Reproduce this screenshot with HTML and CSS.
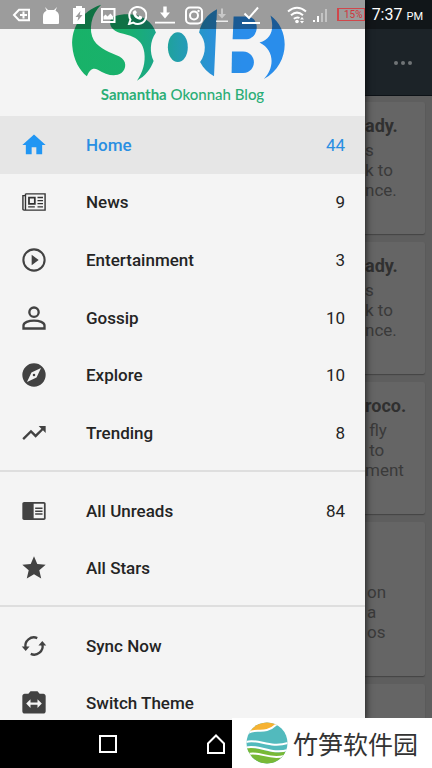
FILE: index.html
```html
<!DOCTYPE html>
<html lang="en">
<head>
<meta charset="utf-8">
<meta name="viewport" content="width=device-width, initial-scale=1">
<title>Samantha Okonnah Blog</title>
<link rel="stylesheet" href="styles.css">
</head>
<body>
<div class="app">
  <aside class="drawer">
    <header class="brand">
      <svg class="brand-mark" viewBox="30 0 655 250" aria-hidden="true">
        <defs>
          <linearGradient id="tone" gradientUnits="userSpaceOnUse" x1="35" y1="0" x2="675" y2="0">
            <stop offset="0" stop-color="#18b268"/>
            <stop offset=".25" stop-color="#19b16c"/>
            <stop offset=".4" stop-color="#1ba68b"/>
            <stop offset=".5" stop-color="#229eac"/>
            <stop offset=".66" stop-color="#2a91d8"/>
            <stop offset=".8" stop-color="#298deb"/>
            <stop offset="1" stop-color="#298deb"/>
          </linearGradient>
        </defs>
        <g fill="url(#tone)">
          <path d="M123 14C62 34 33 84 36 138C39 180 58 213 80 230C88 209 99 202 113 210C138 226 165 233 184 220C200 207 201 182 178 170C151 157 119 149 101 121C84 91 92 43 123 14Z"/>
          <path d="M150 66C151 49 178 42 208 43C249 44 277 67 288 98C269 125 269 158 281 184C272 209 255 230 231 243C249 216 257 188 253 158C248 119 218 109 190 102C163 95 149 84 150 66Z"/>
          <ellipse cx="354" cy="142" rx="30" ry="45"/>
          <path d="M472 28C443 43 424 67 418 98C441 124 440 161 421 187C431 206 445 220 463 230Z"/>
          <path d="M522 50H562C602 51 601 113 562 118H519Z"/>
          <path d="M517 155H550C594 157 594 217 551 220H516Z"/>
          <path d="M633 47C694 91 692 194 613 238C646 205 646 150 600 128C637 119 645 85 633 47Z"/>
        </g>
      </svg>
      <h1 class="brand-name"><b>Samantha</b> Okonnah Blog</h1>
    </header>
    <nav class="menu">
      <div class="group group-six">
        <a class="item active" href="#home">
          <svg class="icon" viewBox="0 0 24 24"><path d="M10 20v-6h4v6h5v-8h3L12 3 2 12h3v8z"/></svg>
          <span class="label">Home</span><span class="count">44</span></a>
        <a class="item" href="#news">
          <svg class="icon line thin" viewBox="0 0 24 24"><path d="M4.700 5H21.500V19H3.500Q2.500 19 2.500 18V6.500H4.700M4.700 5V18.500"/><path d="M7.700 8.300h5v5.200h-5z" stroke-width="1.500"/><path d="M15 8.200h4.700M15 10.800h4.700M15 13.400h4.700M7 16.200h5.700M15 16.200h4.700"/></svg>
          <span class="label">News</span><span class="count">9</span></a>
        <a class="item" href="#entertainment">
          <svg class="icon" viewBox="0 0 24 24"><path d="M10 16.500l6-4.500-6-4.500zM12 2a10 10 0 1 0 0 20 10 10 0 0 0 0-20zm0 18.200a8.200 8.200 0 1 1 0-16.400 8.200 8.200 0 0 1 0 16.400z"/></svg>
          <span class="label">Entertainment</span><span class="count">3</span></a>
        <a class="item" href="#gossip">
          <svg class="icon line" viewBox="0 0 24 24"><circle cx="12" cy="7" r="4"/><path d="M3 21V18.500C3 12.800 21 12.800 21 18.500V21Z"/></svg>
          <span class="label">Gossip</span><span class="count">10</span></a>
        <a class="item" href="#explore">
          <svg class="icon" viewBox="0 0 24 24"><path d="M12 10.900a1.100 1.100 0 1 0 0 2.200 1.100 1.100 0 0 0 0-2.200zM12 2a10 10 0 1 0 0 20 10 10 0 0 0 0-20zm2.190 12.190L6 18l3.810-8.190L18 6z"/></svg>
          <span class="label">Explore</span><span class="count">10</span></a>
        <a class="item" href="#trending">
          <svg class="icon" viewBox="0 0 24 24"><path d="M16 6l2.290 2.290-4.880 4.880-4-4L2 16.590 3.410 18l6-6 4 4 6.300-6.290L22 12V6z"/></svg>
          <span class="label">Trending</span><span class="count">8</span></a>
      </div>
      <hr class="rule">
      <div class="group group-two">
        <a class="item" href="#unreads">
          <svg class="icon" viewBox="0 0 24 24"><path d="M20.500 4.300h-17C2.700 4.300 2 5 2 5.800v12.400c0 .8.700 1.500 1.500 1.500h17c.8 0 1.500-.7 1.500-1.500V5.800c0-.8-.7-1.500-1.500-1.500zm0 13.900h-8.800V5.800h8.800z"/><path d="M13 9h6.300v1.300H13zM13 11.500h6.300v1.300H13zM13 14h6.300v1.300H13z"/></svg>
          <span class="label">All Unreads</span><span class="count">84</span></a>
        <a class="item" href="#stars">
          <svg class="icon" viewBox="0 0 24 24"><path d="M12 17.270L18.180 21l-1.640-7.030L22 9.240l-7.190-.61L12 2 9.190 8.630 2 9.240l5.460 4.730L5.820 21z"/></svg>
          <span class="label">All Stars</span></a>
      </div>
      <hr class="rule">
      <div class="group group-two">
        <a class="item" href="#sync">
          <svg class="icon" viewBox="0 0 24 24"><path class="arc" d="M4.800 13.500A7.300 7.300 0 0 1 14.800 5.200M19.200 10.500A7.300 7.300 0 0 1 9.200 18.800"/><path d="M1.500 12.500h6.700l-3.300 3.700zM15.800 11.500h6.700L19.100 7.800z"/></svg>
          <span class="label">Sync Now</span></a>
        <a class="item" href="#theme">
          <svg class="icon" viewBox="0 0 24 24"><path d="M20 4h-3.200L15 2H9L7.200 4H4c-1.100 0-2 .9-2 2v13c0 1.100.9 2 2 2h16c1.100 0 2-.9 2-2V6c0-1.100-.9-2-2-2zm-5 12.200V13.500H9v2.700L5.300 12.500 9 8.800v2.700h6V8.800l3.700 3.700z"/></svg>
          <span class="label">Switch Theme</span></a>
      </div>
    </nav>
  </aside>

  <main class="feed">
    <div class="toolbar">
      <button class="more" aria-label="More options"><i></i><i></i><i></i></button>
    </div>
    <div class="cards">
      <article class="card"><h2>ady.</h2><p>s<br>k to<br>nce.</p></article>
      <article class="card"><h2>ady.</h2><p>s<br>k to<br>nce.</p></article>
      <article class="card"><h2>roco.</h2><p>&nbsp;fly<br>&nbsp;to<br>ment</p></article>
      <article class="card tall"><p>on<br>a<br>os</p></article>
      <article class="card"></article>
    </div>
  </main>

  <div class="status">
    <div class="notices">
      <svg viewBox="0 0 20 20"><path class="s2" d="M2 10 7 4.700H17V15.300H7Z"/><path class="s2" d="M8 10h7M11.500 6.500v7"/></svg>
      <svg viewBox="0 0 20 20"><path d="M2 18V11C2 8 4 6.500 5.500 5.800L4 2l3 3h6l3-3-1.500 3.800C16 6.500 18 8 18 11v7q0 1-1 1H3q-1 0-1-1z"/></svg>
      <svg viewBox="0 0 20 20"><path fill-rule="evenodd" d="M7 1h6v2h3v16H4V3h3zM11.500 6l-5 6H9.300l-.8 4 5-6h-2.800z"/></svg>
      <svg viewBox="0 0 20 20"><path class="s2" d="M4 4h12.500v13H4z"/><path d="M5.500 14.500v-3l2-2 2 2 3-3 2.500 3v3z"/></svg>
      <svg viewBox="0 0 20 20"><path class="s2" d="M2 19l1.500-4.300A8.500 8.500 0 1 1 6.300 17.600Z"/><path d="M7.200 5.500 5.800 7c0 4.200 3.500 7.700 7.700 7.700l1.700-1.500v-1.500l-2.500-1.300-1.200 1.300C10 11 9.300 10.200 8.700 9l1.200-1.200-1-2.300z"/></svg>
      <svg viewBox="0 0 20 20"><path d="M8.300 1.500h3.400v6H15l-5 6-5-6h3.300zM0 16.800h20v1.700H0z"/></svg>
      <svg viewBox="0 0 20 20"><rect class="s2" x="2" y="2.500" width="16" height="16" rx="4"/><circle class="s2" cx="10" cy="10.500" r="4"/><circle cx="14.500" cy="6" r="1.200"/></svg>
      <svg viewBox="0 0 20 20"><path opacity=".45" d="M9 3.500h2V9h3l-4 4.500L6 9h3z"/><path opacity=".8" d="M4 15.500h12v1.500H4z"/></svg>
      <svg viewBox="0 0 20 20"><path d="M1 17h18v2H1z"/><path class="s2" d="M3.500 8.500 8 13 17 2.500"/></svg>
    </div>
    <svg class="wifi" viewBox="0 0 20 20"><path class="s2" d="M1 6.500Q10-1 19 6.500M4 10.300Q10 5 16 10.300M6.800 13.800Q10 11.500 12.500 13"/><circle cx="10" cy="16.500" r="1.800"/><path d="M15 12l2 2.500h-4zM15 18.500l2-2.500h-4z"/></svg>
    <svg class="signal" viewBox="0 0 16 16"><path d="M1 13h2v2H1zM5 9h2v6H5z"/><path opacity=".4" d="M9 6h2v9H9zM13 2h2v13h-2z"/></svg>
    <span class="battery">15%</span>
    <time class="clock">7:37 <small>PM</small></time>
  </div>
</div>

<footer class="system">
  <button aria-label="Recent apps"><svg viewBox="0 0 20 20"><path d="M2 2h16v16H2z"/></svg></button>
  <button aria-label="Home screen"><svg viewBox="0 0 20 20"><path d="M2 9.500 10 1.500l8 8V19H2z"/></svg></button>
</footer>

<div class="badge">
  <svg viewBox="0 0 42 42" aria-hidden="true">
    <defs><clipPath id="disc"><circle cx="21" cy="21" r="20.500"/></clipPath></defs>
    <g clip-path="url(#disc)">
      <path fill="#52babd" d="M0 0h42v42H0z"/>
      <path fill="#f6b231" d="M0 12C8 5 15 14 30 3L32 0H0z"/>
      <path fill="#78b937" d="M0 26C13 24 25 34 42 29V42H0z"/>
      <g class="waves">
        <path d="M2 11C11 5 18 14 31 2"/>
        <path d="M0 20C12 16 24 27 42 21"/>
        <path d="M0 25.500C13 22 25 33 42 28"/>
        <path d="M2 32C15 29 22 38 38 34"/>
      </g>
    </g>
  </svg>
  <span lang="zh-CN">竹笋软件园</span>
</div>
</body>
</html>
```

FILE: styles.css
```css
* {
  box-sizing: border-box;
}

body {
  margin: 0;
  height: 100vh;
  display: flex;
  flex-direction: column;
  position: relative;
  overflow: hidden;
  background: #000;
  font-family: Roboto, "Liberation Sans", sans-serif;
}

h1, h2, p {
  margin: 0;
}

button {
  border: 0;
  padding: 0;
  background: none;
}

.app {
  flex: 1;
  min-height: 0;
  display: grid;
  grid-template-columns: 1fr 67px;
  grid-template-rows: minmax(0, 1fr);
  position: relative;
  overflow: hidden;
}

/* Drawer */
.drawer {
  background: #f4f4f4;
  overflow: hidden;
  position: relative;
  z-index: 1;
  box-shadow: 0 0 7px 1px rgba(0, 0, 0, .7);
}

.brand {
  height: 116px;
  display: flex;
  flex-direction: column;
  align-items: center;
}

.brand-mark {
  width: 218px;
  height: 83px;
  flex: none;
  margin-right: 8px;
}

.brand-name {
  font: 500 15px/22px Lato, sans-serif;
  color: #2aae76;
}

.brand-name b {
  font-weight: 700;
}

.group {
  display: grid;
  grid-auto-rows: 1fr;
}

.group-six {
  height: 346px;
}

.group-two {
  height: 115px;
}

.item {
  display: flex;
  align-items: center;
  padding: 0 20px;
  color: #242424;
  font-size: 17px;
  text-decoration: none;
}

.icon {
  width: 28px;
  height: 28px;
  margin-right: 38px;
  fill: #424242;
}

.line {
  fill: none;
  stroke: #424242;
  stroke-width: 2;
}

.thin {
  stroke: #333;
  stroke-width: 1.2;
}

.arc {
  fill: none;
  stroke: #424242;
  stroke-width: 2;
}

.label {
  flex: 1;
  font-weight: 500;
}

.active {
  background: #e6e6e6;
  color: #2a8fe2;
}

.active .icon {
  fill: #2196f3;
}

.rule {
  height: 2px;
  margin: 8px 0 10px;
  border: 0;
  background: #dedede;
}

/* Dimmed page behind the drawer */
.feed {
  background: #5e5e5e;
  overflow: hidden;
}

.toolbar {
  height: 96px;
  padding: 30px 20px 0 0;
  display: flex;
  align-items: center;
  justify-content: flex-end;
  background: #1c2328;
  border-bottom: 1px solid #0d1217;
}

.more {
  display: flex;
  gap: 3px;
  padding: 12px 0;
}

.more i {
  width: 4px;
  height: 4px;
  border-radius: 50%;
  background: #707476;
}

.cards {
  display: grid;
  gap: 8px;
  padding: 6px 7px 0 0;
}

.card {
  height: 132px;
  padding-top: 12px;
  background: #656565;
  border-radius: 0 2px 2px 0;
  box-shadow: 0 1px 1px #444;
  color: #3a3a3a;
}

.card h2 {
  margin-bottom: 2px;
  font-size: 18px;
  line-height: 24px;
  font-weight: 700;
  color: #303030;
}

.card p {
  font-size: 17px;
  line-height: 20px;
}

.tall {
  height: 154px;
  padding: 60px 0 0 2px;
}

/* Status bar */
.status {
  position: absolute;
  inset: 0 0 auto;
  z-index: 2;
  height: 29px;
  display: flex;
  align-items: center;
  padding: 0 9px 0 12px;
  background: rgba(0, 0, 0, .36);
  color: #fff;
}

.status svg {
  fill: #fff;
}

.status .s2 {
  fill: none;
  stroke: #fff;
  stroke-width: 2;
}

.notices {
  width: 249px;
  display: flex;
  justify-content: space-between;
}

.notices svg {
  width: 20px;
  height: 20px;
}

.wifi {
  width: 20px;
  height: 20px;
  margin-left: 26px;
}

.signal {
  width: 16px;
  height: 16px;
  margin-left: 5px;
}

.battery {
  width: 28px;
  height: 13px;
  margin-left: 9px;
  padding-left: 5px;
  border: 1px solid #d0474b;
  border-left-width: 2px;
  font-size: 10px;
  line-height: 12px;
  color: #d0363b;
}

.clock {
  margin-left: auto;
  font-size: 16px;
  white-space: nowrap;
}

.clock small {
  font-size: 11px;
}

/* System navigation */
.system {
  height: 48px;
  display: grid;
  grid-template-columns: repeat(3, 1fr);
  padding: 0 12.5%;
}

.system button {
  display: grid;
  place-items: center;
}

.system svg {
  width: 20px;
  height: 20px;
  fill: none;
  stroke: #fff;
  stroke-width: 2;
}

/* Site badge */
.badge {
  position: absolute;
  right: 0;
  bottom: 0;
  z-index: 3;
  width: 200px;
  height: 50px;
  display: flex;
  align-items: center;
  gap: 5px;
  padding-left: 14px;
  background: #fff;
  color: #333;
  font: 25px/48px "Noto Sans CJK SC", sans-serif;
  white-space: nowrap;
}

.badge svg {
  width: 42px;
  height: 42px;
}

.waves {
  fill: none;
  stroke: #fff;
  stroke-width: 2;
}
```
